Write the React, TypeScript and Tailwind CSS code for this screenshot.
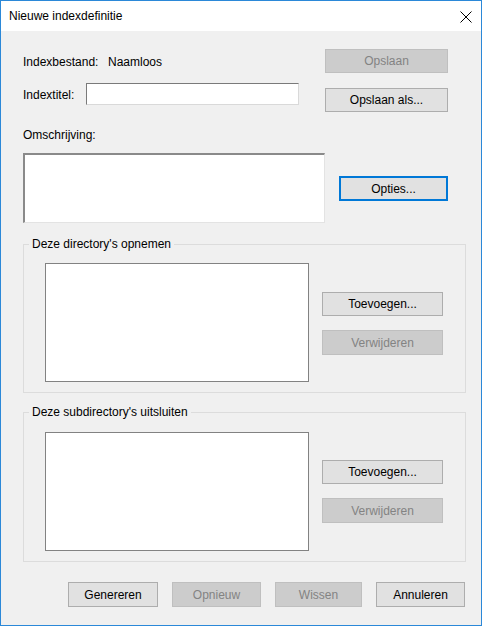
import React from 'react';

const font = { fontFamily: '"Segoe UI", "Liberation Sans", Arial, sans-serif' };

function Button({
  label,
  disabled,
  focused,
  className = '',
}: {
  label: string;
  disabled?: boolean;
  focused?: boolean;
  className?: string;
}) {
  const look = disabled
    ? 'bg-[#cccccc] border border-[#bfbfbf] text-[#838383]'
    : focused
      ? 'bg-[#e1e1e1] border-2 border-[#0078d7] text-black'
      : 'bg-[#e1e1e1] border border-[#adadad] text-black';
  return (
    <button
      type="button"
      disabled={disabled}
      className={`flex items-center justify-center text-[12px] leading-none ${look} ${className}`}
    >
      {label}
    </button>
  );
}

function GroupBox({
  title,
  top,
  listTop,
  addTop,
}: {
  title: string;
  top: string;
  listTop: string;
  addTop: string;
}) {
  return (
    <fieldset className={`w-[443px] border border-[#dcdcdc] ${top}`}>
      <legend className="ml-[5px] px-[3px] text-[12px] leading-[16px] text-black">{title}</legend>
      <div className={`flex pl-[21px] pb-[10px] ${listTop}`}>
        <div className="w-[264px] h-[119px] bg-white border border-[#828282]" />
        <div className={`ml-[13px] flex flex-col gap-[14px] ${addTop}`}>
          <Button label="Toevoegen..." className="w-[121px] h-[24px]" />
          <Button label="Verwijderen" disabled className="w-[121px] h-[25px]" />
        </div>
      </div>
    </fieldset>
  );
}

export default function App() {
  return (
    <div
      style={font}
      className="w-[482px] h-[626px] border border-[#2b88d8] flex flex-col bg-[#f0f0f0] text-black overflow-hidden"
    >
      {/* title bar */}
      <div className="h-[30px] bg-white flex items-center justify-between pl-[8px] pr-[9px]">
        <span className="text-[12px] leading-none">Nieuwe indexdefinitie</span>
        <svg width="12" height="12" viewBox="0 0 12 12" className="mt-[1px]">
          <path d="M0.5 0.5 L11.5 11.5 M11.5 0.5 L0.5 11.5" stroke="#000" strokeWidth="1" fill="none" />
        </svg>
      </div>

      <div className="flex-1 flex flex-col pl-[22px] pr-[16px] text-[12px]">
        {/* top rows */}
        <div className="flex mt-[18px]">
          <div className="w-[302px] flex flex-col">
            <div className="h-[25px] flex items-center">
              <span className="w-[85px]">Indexbestand:</span>
              <span>Naamloos</span>
            </div>
            <div className="mt-[9px] flex items-center">
              <span className="w-[63px] pt-[2px]">Indextitel:</span>
              <div className="w-[213px] h-[22px] bg-white border border-[#7a7a7a] border-b-[#d9d9d9] border-r-[#d9d9d9]" />
            </div>
          </div>
          <div className="flex flex-col gap-[15px]">
            <Button label="Opslaan" disabled className="w-[123px] h-[24px]" />
            <Button label="Opslaan als..." className="w-[123px] h-[24px]" />
          </div>
        </div>

        {/* description */}
        <div className="mt-[15px] leading-[16px]">Omschrijving:</div>
        <div className="flex mt-[10px]">
          <div className="w-[302px] h-[70px] bg-white border-t-2 border-l-2 border-[#8a8a8a] border-b border-r border-b-[#e3e3e3] border-r-[#e3e3e3]" />
          <Button label="Opties..." focused className="ml-[14px] mt-[23px] w-[109px] h-[25px]" />
        </div>

        <GroupBox title="Deze directory's opnemen" top="mt-[13px]" listTop="pt-[11px]" addTop="mt-[29px]" />
        <GroupBox title="Deze subdirectory's uitsluiten" top="mt-[11px]" listTop="pt-[12px]" addTop="mt-[28px]" />

        {/* bottom buttons */}
        <div className="mt-[20px] flex justify-end gap-[14px]">
          <Button label="Genereren" className="w-[90px] h-[25px]" />
          <Button label="Opnieuw" disabled className="w-[89px] h-[25px]" />
          <Button label="Wissen" disabled className="w-[87px] h-[25px]" />
          <Button label="Annuleren" className="w-[89px] h-[25px]" />
        </div>
      </div>
    </div>
  );
}
